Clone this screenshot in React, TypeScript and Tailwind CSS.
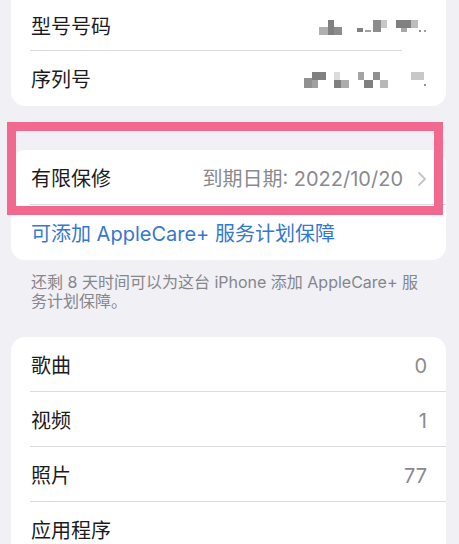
import React from "react";

const font = { fontFamily: '"Inter", "Noto Sans CJK SC", sans-serif' };

function Row({ label, value, divider, chevron, children }: { label: string; value?: string; divider?: boolean; chevron?: boolean; children?: React.ReactNode }) {
  return (
    <div className="relative flex h-[55px] items-center pl-[20px] pr-[19px] pt-[3px]">
      <span className="text-[20px] text-[#1c1c1e] leading-none">{label}</span>
      <div className="ml-auto flex items-center">
        {value !== undefined && <span className="text-[20px] text-[#8a8a8e] leading-none">{value}</span>}
        {children}
        {chevron && (
          <svg width="10" height="16" viewBox="0 0 10 16" className="ml-[14px]">
            <polyline points="2,2 8,8 2,14" fill="none" stroke="#c5c5c8" strokeWidth="1.8" strokeLinecap="round" strokeLinejoin="round" />
          </svg>
        )}
      </div>
      {divider && <div className="absolute bottom-0 left-[19px] right-0 h-px bg-[#dcdce0]" />}
    </div>
  );
}

function Mosaic1() {
  return (
    <svg width="110" height="20" viewBox="316 18 110 20">
      <rect x="318" y="28" width="9" height="8" fill="#b0b0b0" />
      <rect x="327" y="21" width="6" height="15" fill="#808080" />
      <rect x="333" y="28" width="8" height="8" fill="#8c8c8c" />
      <rect x="356" y="29" width="6" height="4" fill="#808080" />
      <rect x="372" y="21" width="8" height="12" fill="#8c8c8c" />
      <rect x="380" y="21" width="6" height="8" fill="#c8c8c8" />
      <rect x="364" y="31" width="6" height="2" fill="#a0a0a0" />
      <rect x="395" y="21" width="15" height="8" fill="#808080" />
      <rect x="410" y="21" width="7" height="8" fill="#bcbcbc" />
      <rect x="400" y="29" width="6" height="4" fill="#a8a8a8" />
      <rect x="418" y="31" width="2" height="2" fill="#909090" />
      <rect x="423" y="31" width="2" height="2" fill="#a0a0a0" />
    </svg>
  );
}

function Mosaic2() {
  return (
    <svg width="124" height="18" viewBox="302 73 124 18">
      <rect x="303" y="80" width="8" height="10" fill="#909090" />
      <rect x="311" y="74" width="14" height="8" fill="#808080" />
      <rect x="311" y="82" width="6" height="8" fill="#a0a0a0" />
      <rect x="333" y="82" width="7" height="8" fill="#808080" />
      <rect x="340" y="82" width="8" height="8" fill="#acacac" />
      <rect x="333" y="74" width="6" height="8" fill="#dcdcdc" />
      <rect x="357" y="74" width="6" height="8" fill="#a4a4a4" />
      <rect x="363" y="82" width="9" height="8" fill="#808080" />
      <rect x="372" y="74" width="7" height="8" fill="#909090" />
      <rect x="379" y="82" width="8" height="8" fill="#b8b8b8" />
      <rect x="410" y="74" width="13" height="8" fill="#c8c8c8" />
      <rect x="423" y="86" width="2" height="2" fill="#909090" />
    </svg>
  );
}

export default function App() {
  return (
    <div className="relative h-[544px] w-[459px] overflow-hidden bg-[#f0f0f5]" style={font}>
      <div className="ml-[11px] w-[435px] rounded-b-[14px] bg-white">
        <div className="relative flex h-[51px] items-center pl-[20px] pr-[19px] pt-[2px]">
          <span className="text-[20px] text-[#1c1c1e] leading-none">型号号码</span>
          <div className="ml-auto">
            <Mosaic1 />
          </div>
          <div className="absolute bottom-0 left-[19px] right-[44px] h-px bg-[#dcdce0]" />
        </div>
        <div className="flex h-[55px] items-center pl-[20px] pr-[19px] pt-[2px]">
          <span className="text-[20px] text-[#1c1c1e] leading-none">序列号</span>
          <div className="ml-auto">
            <Mosaic2 />
          </div>
        </div>
      </div>

      <div className="ml-[11px] mt-[44px] w-[435px] rounded-[14px] bg-white">
        <Row label="有限保修" value="到期日期: 2022/10/20" chevron divider />
        <div className="flex h-[55px] items-center pl-[20px] pt-[2px]">
          <span className="text-[20px] text-[#3478d0] leading-none">可添加 AppleCare+ 服务计划保障</span>
        </div>
      </div>

      <div className="ml-[31px] mr-[40px] mt-[13px] text-[16px] leading-[19px] text-[#86868b]">
        还剩 8 天时间可以为这台 iPhone 添加 AppleCare+ 服务计划保障。
      </div>

      <div className="ml-[11px] mt-[26px] w-[435px] rounded-[14px] bg-white">
        <Row label="歌曲" value="0" divider />
        <Row label="视频" value="1" divider />
        <Row label="照片" value="77" divider />
        <Row label="应用程序" />
      </div>

      <div className="absolute left-[7px] top-[122px] h-[93px] w-[436px] border-[9px] border-[#f2698f]" />
    </div>
  );
}
